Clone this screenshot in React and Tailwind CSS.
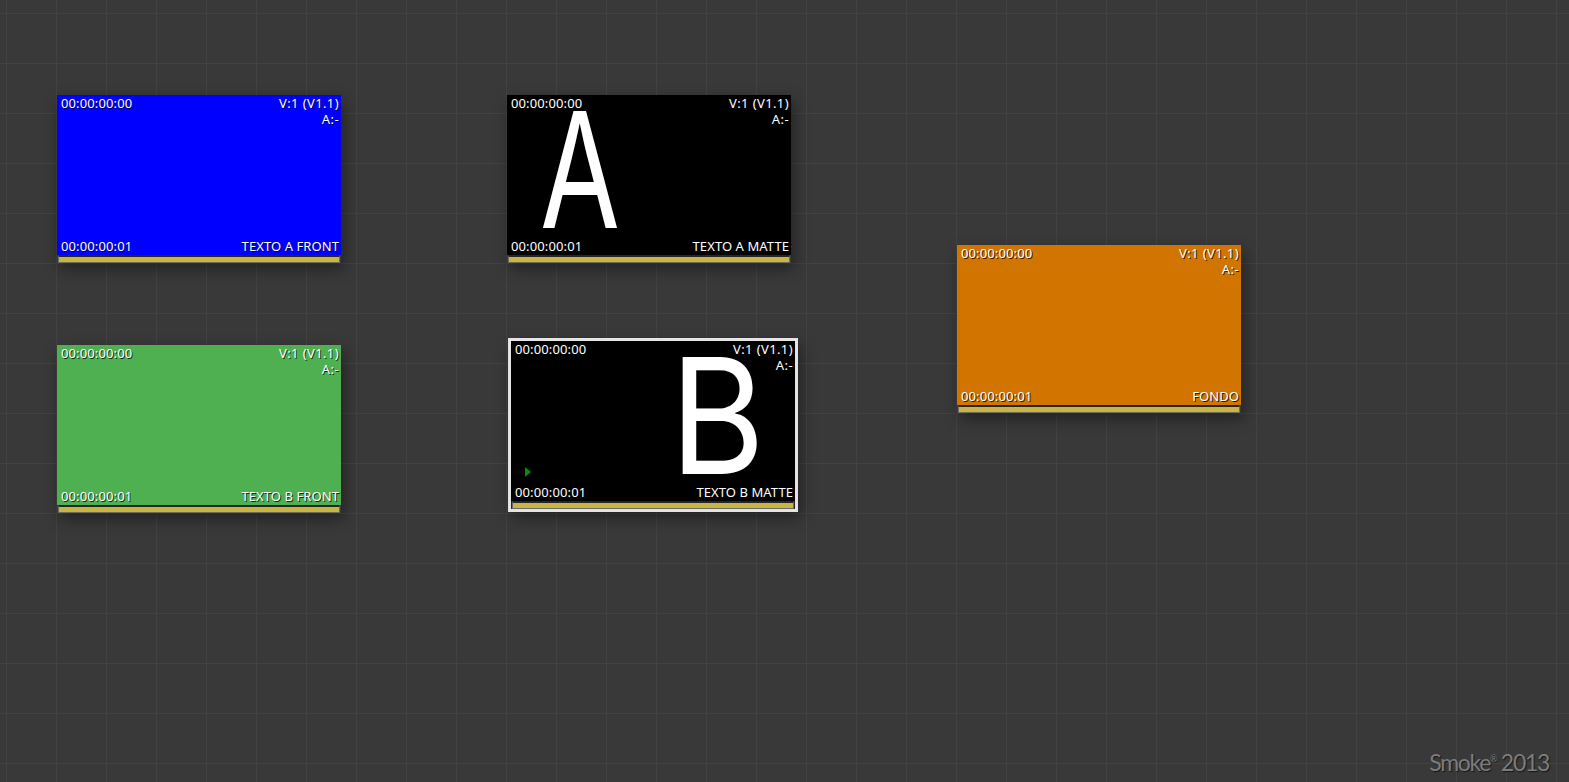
const font = { fontFamily: '"Noto Sans", sans-serif' };

function Clip({ name, bg, children, indicator }) {
  return (
    <div className={`relative h-[160px] w-[284px] overflow-hidden ${bg}`}>
      {children}
      <div className="absolute inset-0 flex flex-col justify-between pb-px pl-1 pr-0.5 text-[13px] leading-4 text-white [text-shadow:1px_1px_0_rgba(0,0,0,0.75)]">
        <div className="flex justify-between">
          <span className="tracking-[0.12px]">00:00:00:00</span>
          <span className="text-right tracking-[0.4px]">
            V:1 (V1.1)
            <br />
            A:-
          </span>
        </div>
        {indicator}
        <div className="flex justify-between">
          <span className="tracking-[0.12px]">00:00:00:01</span>
          <span className="tracking-[0.08px]">{name}</span>
        </div>
      </div>
    </div>
  );
}

function Bar() {
  return (
    <div className="mx-px h-[8px] border-x border-b border-t-2 border-x-[#6a6a60] border-b-[#6a6a60] border-t-[#262626] bg-[#c9b544]" />
  );
}

function Node({ className, name, bg, children }) {
  return (
    <div className={`absolute w-[284px] shadow-[3px_6px_14px_rgba(0,0,0,0.4)] ${className}`}>
      <Clip name={name} bg={bg}>
        {children}
      </Clip>
      <Bar />
    </div>
  );
}

function Letter({ className, children }) {
  return (
    <span
      style={{ fontFamily: 'Inter, sans-serif' }}
      className={`absolute origin-left text-[161px] leading-[120px] text-white ${className}`}
    >
      {children}
    </span>
  );
}

export default function App() {
  return (
    <div
      style={font}
      className="relative h-[782px] w-[1569px] overflow-hidden bg-[#393939] bg-[linear-gradient(to_right,#424242_1px,transparent_1px),linear-gradient(to_bottom,#424242_1px,transparent_1px)] bg-[length:50px_50px] bg-[position:6px_13px]"
    >
      <Node className="left-[57px] top-[95px]" name="TEXTO A FRONT" bg="bg-[#0000ff]" />
      <Node className="left-[57px] top-[345px]" name="TEXTO B FRONT" bg="bg-[#4fb052]" />
      <Node className="left-[507px] top-[95px]" name="TEXTO A MATTE" bg="bg-black">
        <Letter className="left-[33px] top-[15px] scale-x-[0.72]">A</Letter>
      </Node>
      <Node className="left-[957px] top-[245px]" name="FONDO" bg="bg-[#d17400]" />
      <div className="absolute left-[508px] top-[338px] w-[290px] border-[3px] border-[#e4e4e4] bg-[#262626] shadow-[3px_6px_14px_rgba(0,0,0,0.4)]">
        <Clip
          name="TEXTO B MATTE"
          bg="bg-black"
          indicator={
            <svg className="absolute left-[14px] top-[126px]" width="6" height="10" viewBox="0 0 6 10">
              <path d="M0 0 L6 5 L0 10 Z" fill="#0a8f0a" />
            </svg>
          }
        >
          <Letter className="left-[159px] top-[15px] scale-x-[0.9]">B</Letter>
        </Clip>
        <Bar />
      </div>
      <div
        className="absolute bottom-0 right-[20px] text-[23px] leading-[28px] tracking-[-1.3px] text-[#7c7c7c] [text-shadow:1px_1px_1px_rgba(0,0,0,0.6)]"
        style={{ fontFamily: 'Lato, sans-serif' }}
      >
        Smoke<span className="relative -top-[9px] text-[9px]">®</span> 2013
      </div>
    </div>
  );
}
